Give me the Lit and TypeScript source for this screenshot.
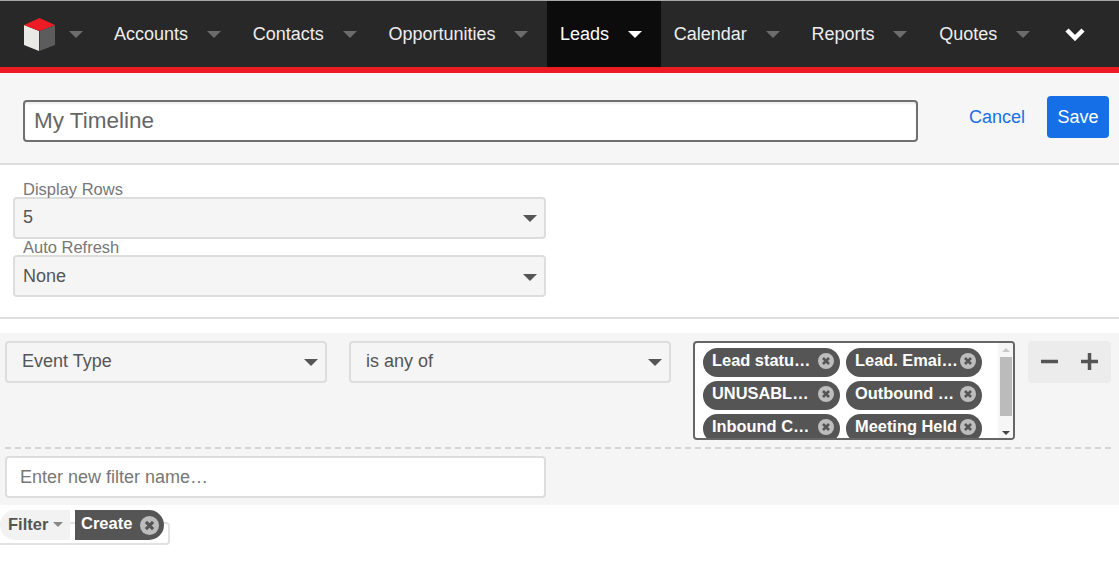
import { LitElement, html, css } from "lit";
import { customElement } from "lit/decorators.js";

const X = html`<svg class="x" viewBox="0 0 16 16"><circle cx="8" cy="8" r="8" fill="#bdbdbd"/><path d="M5 5l6 6M11 5l-6 6" stroke="#555" stroke-width="2.6" fill="none"/></svg>`;

@customElement("app-root")
export class AppRoot extends LitElement {
  static styles = css`
    :host { display: block; width: 1119px; height: 583px; overflow: hidden; background: #fff; font-family: "Liberation Sans", Arial, sans-serif; color: #555; }
    * { box-sizing: border-box; }
    .nav { height: 73px; border-top: 1px solid #a8a8a8; border-bottom: 6px solid #ed1c24; background: #282828; display: flex; align-items: stretch; color: #eee; font-size: 18px; }
    .logo { width: 101px; display: flex; align-items: center; padding-left: 23px; gap: 13px; }
    .logo svg { width: 33px; height: 34px; display: block; margin-top: 0; }
    .item { display: flex; align-items: center; padding: 0 18.65px 0 13px; gap: 19px; }
    .item.on { background: #0c0c0c; color: #fff; }
    .tri { width: 0; height: 0; border-left: 7px solid transparent; border-right: 7px solid transparent; border-top: 7px solid #6c6c6c; }
    .on .tri { border-top-color: #fff; }
    .chev { margin-left: 15px; width: 22px; height: 14px; display: block; align-self: center; }
    .head { height: 92px; background: #f6f6f6; border-bottom: 2px solid #ddd; display: flex; align-items: flex-start; padding: 23px 10px 0 23px; }
    .title { width: 895px; height: 42px; margin-top: 4px; border: 2px solid #707070; border-radius: 4px; background: #fff; font-size: 22.5px; color: #666; padding: 0 9px; display: flex; align-items: center; box-shadow: inset 0 2px 2px #eee; }
    .cancel { color: #1570e8; font-size: 18px; margin-left: 51px; margin-top: 11px; width: 78px; }
    .save { width: 62px; height: 42px; background: #1570e8; color: #fff; border-radius: 4px; font-size: 18px; display: flex; align-items: center; justify-content: center; }
    .form { height: 154px; border-bottom: 2px solid #ddd; padding: 16px 0 0 13px; }
    .lab { font-size: 16.5px; line-height: 17px; color: #777; padding-left: 10px; height: 16px; }
    .sel { background: #f5f5f5; border: 2px solid #ddd; border-radius: 4px; height: 42px; display: flex; align-items: center; justify-content: space-between; padding: 0 7px 2px 8px; font-size: 18px; color: #555; }
    .form .sel { width: 533px; margin-bottom: 0; }
    .form .sel.low { padding-bottom: 0; }
    .stri { width: 0; height: 0; border-left: 7px solid transparent; border-right: 7px solid transparent; border-top: 7px solid #555; margin-top: 2px; }
    .filters { margin-top: 14px; height: 172px; background: #f5f5f5; padding: 8px 8px 0 5px; }
    .row { display: flex; align-items: flex-start; height: 99px; }
    .row .sel { width: 322px; padding-left: 15px; padding-right: 7px; margin-right: 22px; }
    .multi { width: 322px; height: 99px; border: 2px solid #666; border-radius: 4px; background: #fff; display: flex; overflow: hidden; }
    .pills { width: 306px; height: 95px; padding: 5px 0 0 8px; display: grid; grid-template-columns: 137px 136px; gap: 4px 6px; grid-auto-rows: 29px; overflow: hidden; }
    .pill { background: #555; border-radius: 15px; color: #fff; font-weight: bold; font-size: 16.4px; display: flex; align-items: center; justify-content: space-between; padding: 0 6px 4px 9px; white-space: nowrap; }
    .x { width: 16px; height: 16px; flex: none; display: block; }
    .sb { width: 15px; display: flex; flex-direction: column; align-items: center; background: #f6f6f6; }
    .sb .up { margin-top: 5px; border-left: 4px solid transparent; border-right: 4px solid transparent; border-bottom: 4px solid #c8c8c8; }
    .sb .thumb { width: 12px; height: 59px; background: #bbb; margin-top: 5px; }
    .sb .dn { margin-top: 15px; border-left: 4px solid transparent; border-right: 4px solid transparent; border-top: 4px solid #444; }
    .btns { width: 83px; height: 42px; margin-left: 13px; background: #ececec; border-radius: 4px; display: flex; align-items: center; justify-content: space-between; padding: 0 13px 2px; }
    .btns svg { width: 17px; height: 17px; display: block; }
    .dash { border-top: 2px dashed #d4d4d4; margin-top: 7px; }
    .name { margin-top: 7px; width: 541px; height: 42px; background: #fff; border: 2px solid #ddd; border-radius: 4px; font-size: 18px; color: #777; padding: 0 13px; display: flex; align-items: center; }
    .bottom { display: grid; margin-top: 5px; width: 170px; height: 36px; }
    .bottom > * { grid-area: 1 / 1; }
    .frame { margin-top: 12px; height: 23px; border: 2px solid #e2e2e2; border-left: 0; border-radius: 0 4px 4px 0; }
    .chips { display: flex; height: 30px; }
    .filt { width: 70px; background: #f2f2f2; border-radius: 15px 0 0 15px; padding: 0 0 2px 8px; font-weight: bold; font-size: 16.5px; display: flex; align-items: center; gap: 5px; color: #555; }
    .filt i { border-left: 5px solid transparent; border-right: 5px solid transparent; border-top: 5px solid #888; }
    .create { margin-left: 5px; width: 89px; background: #555; color: #fff; font-weight: bold; font-size: 16.5px; border-radius: 0 15px 15px 0; display: flex; align-items: center; justify-content: space-between; padding: 0 5px 3px 6px; }
    .create .x { width: 19px; height: 19px; margin-top: 3px; }
  `;

  render() {
    const items = ["Accounts", "Contacts", "Opportunities", "Leads", "Calendar", "Reports", "Quotes"];
    const pills = ["Lead statu…", "Lead. Emai…", "UNUSABL…", "Outbound …", "Inbound C…", "Meeting Held"];
    return html`
      <div class="nav">
        <div class="logo">
          <svg viewBox="0 0 33 34">
            <path d="M1 8L16 14V34L1 28Z" fill="#e9e9e6"/>
            <path d="M16.5 14L32 8V28L16.5 34Z" fill="#5c5c5c"/>
            <path d="M16.5 1L32 8L16.5 14L1 8Z" fill="#ed1c24"/>
          </svg>
          <span class="tri"></span>
        </div>
        ${items.map(i => html`<div class="item ${i === "Leads" ? "on" : ""}"><span>${i}</span><span class="tri"></span></div>`)}
        <svg class="chev" viewBox="0 0 22 14"><path d="M3 3l8 8 8-8" fill="none" stroke="#fff" stroke-width="4.5"/></svg>
      </div>
      <div class="head">
        <div class="title">My Timeline</div>
        <div class="cancel">Cancel</div>
        <div class="save">Save</div>
      </div>
      <div class="form">
        <div class="lab">Display Rows</div>
        <div class="sel"><span>5</span><span class="stri"></span></div>
        <div class="lab">Auto Refresh</div>
        <div class="sel low"><span>None</span><span class="stri"></span></div>
      </div>
      <div class="filters">
        <div class="row">
          <div class="sel"><span>Event Type</span><span class="stri"></span></div>
          <div class="sel"><span>is any of</span><span class="stri"></span></div>
          <div class="multi">
            <div class="pills">${pills.map(p => html`<div class="pill"><span>${p}</span>${X}</div>`)}</div>
            <div class="sb"><i class="up"></i><div class="thumb"></div><i class="dn"></i></div>
          </div>
          <div class="btns">
            <svg viewBox="0 0 17 17"><path d="M0 8.5h17" stroke="#555" stroke-width="3.5"/></svg>
            <svg viewBox="0 0 17 17"><path d="M0 8.5h17M8.5 0v17" stroke="#555" stroke-width="3.5"/></svg>
          </div>
        </div>
        <div class="dash"></div>
        <div class="name">Enter new filter name…</div>
      </div>
      <div class="bottom">
        <div class="frame"></div>
        <div class="chips">
          <div class="filt"><span>Filter</span><i></i></div>
          <div class="create"><span>Create</span>${X}</div>
        </div>
      </div>
    `;
  }
}
